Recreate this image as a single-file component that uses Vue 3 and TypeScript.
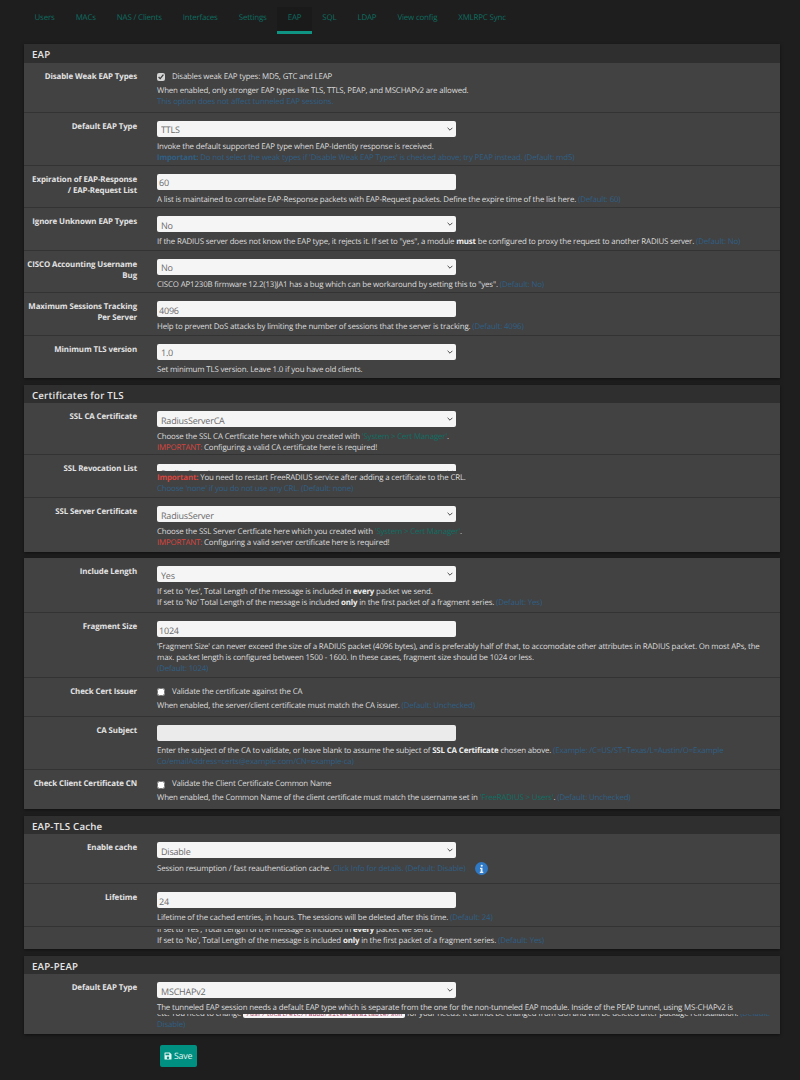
<script setup lang="ts">
const tabs = ["Users", "MACs", "NAS / Clients", "Interfaces", "Settings", "EAP", "SQL", "LDAP", "View config", "XMLRPC Sync"];
const activeTab = "EAP";
</script>

<template>
  <div class="page">
    <nav class="tabs">
      <a v-for="tab in tabs" :key="tab" class="tab" :class="{ active: tab === activeTab }">{{ tab }}</a>
    </nav>

    <section class="panel">
      <h2 class="heading">EAP</h2>
      <div class="row check-row">
        <div class="lbl">Disable Weak EAP Types</div>
        <div class="fld">
          <label class="check"><input type="checkbox" checked /> Disables weak EAP types: MD5, GTC and LEAP</label>
          <p class="help">When enabled, only stronger EAP types like TLS, TTLS, PEAP, and MSCHAPv2 are allowed.<br /><span class="dim">This option does not affect tunneled EAP sessions.</span></p>
        </div>
      </div>
      <div class="row">
        <div class="lbl">Default EAP Type</div>
        <div class="fld">
          <div class="sel"><select><option>TTLS</option></select><svg viewBox="0 0 10 6"><path d="M1 1l4 4 4-4" /></svg></div>
          <p class="help">Invoke the default supported EAP type when EAP-Identity response is received.<br /><span class="dim"><b>Important:</b> Do not select the weak types if 'Disable Weak EAP Types' is checked above; try PEAP instead. (Default: md5)</span></p>
        </div>
      </div>
      <div class="row">
        <div class="lbl">Expiration of EAP-Response<br />/ EAP-Request List</div>
        <div class="fld">
          <input class="txt" value="60" readonly />
          <p class="help">A list is maintained to correlate EAP-Response packets with EAP-Request packets. Define the expire time of the list here. <span class="dim">(Default: 60)</span></p>
        </div>
      </div>
      <div class="row">
        <div class="lbl">Ignore Unknown EAP Types</div>
        <div class="fld">
          <div class="sel"><select><option>No</option></select><svg viewBox="0 0 10 6"><path d="M1 1l4 4 4-4" /></svg></div>
          <p class="help">If the RADIUS server does not know the EAP type, it rejects it. If set to "yes", a module <b>must</b> be configured to proxy the request to another RADIUS server. <span class="dim">(Default: No)</span></p>
        </div>
      </div>
      <div class="row">
        <div class="lbl">CISCO Accounting Username<br />Bug</div>
        <div class="fld">
          <div class="sel"><select><option>No</option></select><svg viewBox="0 0 10 6"><path d="M1 1l4 4 4-4" /></svg></div>
          <p class="help">CISCO AP1230B firmware 12.2(13)JA1 has a bug which can be workaround by setting this to "yes". <span class="dim">(Default: No)</span></p>
        </div>
      </div>
      <div class="row">
        <div class="lbl">Maximum Sessions Tracking<br />Per Server</div>
        <div class="fld">
          <input class="txt" value="4096" readonly />
          <p class="help">Help to prevent DoS attacks by limiting the number of sessions that the server is tracking. <span class="dim">(Default: 4096)</span></p>
        </div>
      </div>
      <div class="row">
        <div class="lbl">Minimum TLS version</div>
        <div class="fld">
          <div class="sel"><select><option>1.0</option></select><svg viewBox="0 0 10 6"><path d="M1 1l4 4 4-4" /></svg></div>
          <p class="help">Set minimum TLS version. Leave 1.0 if you have old clients.</p>
        </div>
      </div>
    </section>

    <section class="panel">
      <h2 class="heading">Certificates for TLS</h2>
      <div class="row tight">
        <div class="lbl">SSL CA Certificate</div>
        <div class="fld">
          <div class="sel"><select><option>RadiusServerCA</option></select><svg viewBox="0 0 10 6"><path d="M1 1l4 4 4-4" /></svg></div>
          <p class="help">Choose the SSL CA Certficate here which you created with <span class="lnk">'System &gt; Cert Manager'</span>.<br /><span class="red">IMPORTANT:</span> Configuring a valid CA certificate here is required!</p>
        </div>
      </div>
      <!-- the screenshot was stitched here: top of the row is cut off by its help text -->
      <div class="row rev-row">
        <div class="rev-top">
          <div class="lbl">SSL Revocation List</div>
          <div class="sel"><select><option>RadiusRevoke</option></select><svg viewBox="0 0 10 6"><path d="M1 1l4 4 4-4" /></svg></div>
        </div>
        <p class="help rev-help"><b class="red">Important:</b> You need to restart FreeRADIUS service after adding a certificate to the CRL.<br /><span class="dim">Choose 'none' if you do not use any CRL. (Default: none)</span></p>
      </div>
      <div class="row">
        <div class="lbl">SSL Server Certificate</div>
        <div class="fld">
          <div class="sel"><select><option>RadiusServer</option></select><svg viewBox="0 0 10 6"><path d="M1 1l4 4 4-4" /></svg></div>
          <p class="help">Choose the SSL Server Certficate here which you created with <span class="lnk">'System &gt; Cert Manager'</span>.<br /><span class="red">IMPORTANT:</span> Configuring a valid server certificate here is required!</p>
        </div>
      </div>
    </section>

    <section class="panel plain">
      <div class="row">
        <div class="lbl">Include Length</div>
        <div class="fld">
          <div class="sel"><select><option>Yes</option></select><svg viewBox="0 0 10 6"><path d="M1 1l4 4 4-4" /></svg></div>
          <p class="help">If set to 'Yes', Total Length of the message is included in <b>every</b> packet we send.<br />If set to 'No' Total Length of the message is included <b>only</b> in the first packet of a fragment series. <span class="dim">(Default: Yes)</span></p>
        </div>
      </div>
      <div class="row">
        <div class="lbl">Fragment Size</div>
        <div class="fld">
          <input class="txt" value="1024" readonly />
          <p class="help">'Fragment Size' can never exceed the size of a RADIUS packet (4096 bytes), and is preferably half of that, to accomodate other attributes in RADIUS packet. On most APs, the max. packet length is configured between 1500 - 1600. In these cases, fragment size should be 1024 or less.<br /><span class="dim">(Default: 1024)</span></p>
        </div>
      </div>
      <div class="row check-row">
        <div class="lbl">Check Cert Issuer</div>
        <div class="fld">
          <label class="check"><input type="checkbox" /> Validate the certificate against the CA</label>
          <p class="help">When enabled, the server/client certificate must match the CA issuer. <span class="dim">(Default: Unchecked)</span></p>
        </div>
      </div>
      <div class="row">
        <div class="lbl">CA Subject</div>
        <div class="fld">
          <input class="txt empty" readonly />
          <p class="help">Enter the subject of the CA to validate, or leave blank to assume the subject of <b>SSL CA Certificate</b> chosen above. <span class="dim">(Example: /C=US/ST=Texas/L=Austin/O=Example Co/emailAddress=certs@example.com/CN=example-ca)</span></p>
        </div>
      </div>
      <div class="row check-row">
        <div class="lbl">Check Client Certificate CN</div>
        <div class="fld">
          <label class="check"><input type="checkbox" /> Validate the Client Certificate Common Name</label>
          <p class="help">When enabled, the Common Name of the client certificate must match the username set in <span class="lnk">'FreeRADIUS &gt; Users'</span>. <span class="dim">(Default: Unchecked)</span></p>
        </div>
      </div>
    </section>

    <section class="panel">
      <h2 class="heading">EAP-TLS Cache</h2>
      <div class="row cache-row">
        <div class="lbl">Enable cache</div>
        <div class="fld">
          <div class="sel"><select><option>Disable</option></select><svg viewBox="0 0 10 6"><path d="M1 1l4 4 4-4" /></svg></div>
          <p class="help info-line">
            <span>Session resumption / fast reauthentication cache. <span class="dim">Click Info for details. (Default: Disable)</span></span>
            <svg class="info" viewBox="0 0 26 26">
              <circle cx="13" cy="13" r="13" />
              <circle class="glyph" cx="13.5" cy="7.5" r="2.2" />
              <path class="glyph" d="M10 11.5h5v8h1.6V22H9.6v-2.500h1.800v-5.500H10z" />
            </svg>
          </p>
        </div>
      </div>
      <div class="row">
        <div class="lbl">Lifetime</div>
        <div class="fld">
          <input class="txt" value="24" readonly />
          <p class="help">Lifetime of the cached entries, in hours. The sessions will be deleted after this time. <span class="dim">(Default: 24)</span></p>
        </div>
      </div>
      <div class="row stitched">
        <div class="fld stitched-fld">
          <div class="cut cut-7"><span>If set to 'Yes', Total Length of the message is included in <b>every</b> packet we send.</span></div>
          <p class="help">If set to 'No', Total Length of the message is included <b>only</b> in the first packet of a fragment series. <span class="dim">(Default: Yes)</span></p>
        </div>
      </div>
    </section>

    <section class="panel">
      <h2 class="heading">EAP-PEAP</h2>
      <div class="row">
        <div class="lbl">Default EAP Type</div>
        <div class="fld">
          <div class="sel"><select><option>MSCHAPv2</option></select><svg viewBox="0 0 10 6"><path d="M1 1l4 4 4-4" /></svg></div>
          <p class="help">The tunneled EAP session needs a default EAP type which is separate from the one for the non-tunneled EAP module. Inside of the PEAP tunnel, using MS-CHAPv2 is</p>
          <div class="cut cut-6"><span>etc. You need to change <code>/usr/local/etc/raddb/sites-available/soh</code> for your needs. It cannot be changed from GUI and will be deleted after package reinstallation. <span class="dim">(Default:</span></span></div>
          <p class="help tail"><span class="dim">Disable)</span></p>
        </div>
      </div>
    </section>

    <button class="save" type="button">
      <svg viewBox="0 0 16 16"><path d="M2 1h9.500L15 4.500V14a1 1 0 0 1-1 1H2a1 1 0 0 1-1-1V2a1 1 0 0 1 1-1zm1 2v3.500h7.500V3zm5 6a2.500 2.500 0 1 0 0 5 2.500 2.500 0 0 0 0-5z" fill-rule="evenodd" /></svg>
      Save
    </button>
  </div>
</template>

<style>
html,
body {
  background: #1e1e1e;
}
</style>

<style scoped>
.page {
  width: 800px;
  height: 1080px;
  overflow: hidden;
  box-sizing: border-box;
  padding: 7px 20px 0 24px;
  background: #1e1e1e;
  color: #dcdcdc;
  font-family: "Open Sans", Lato, sans-serif;
  font-size: 7.900px;
  line-height: 11px;
  letter-spacing: -0.16px;
  text-rendering: geometricPrecision;
}

.tabs {
  display: flex;
  height: 27px;
  margin-bottom: 10px;
}

.tab {
  padding: 6px 10.500px 0;
  height: 18px;
  color: #0d6d60;
}

.tab.active {
  background: #1a1a1a;
  border-bottom: 3px solid #0f9484;
}

.panel {
  background: #424242;
  margin-bottom: 6.600px;
  box-shadow: 0 1px 3px rgba(0, 0, 0, 0.5);
}

.panel.plain .row:first-child {
  padding-bottom: 2.900px;
}

.heading {
  margin: 0;
  height: 18.600px;
  padding: 4px 0 0 8px;
  box-sizing: border-box;
  background: #2f2f2f;
  color: #e6e6e6;
  font-size: 9.700px;
  line-height: 13px;
  font-weight: 600;
  letter-spacing: 0.2px;
}

.row {
  display: grid;
  grid-template-columns: 111px 1fr;
  column-gap: 20px;
  padding: 8px 8px 1.400px 2px;
  border-bottom: 1px solid #333;
  box-sizing: border-box;
}

.row:last-child {
  border-bottom-color: transparent;
}

.row.tight {
  padding-bottom: 0;
}

.check-row {
  padding-bottom: 4px;
}

.cache-row {
  padding-bottom: 8px;
}

.lbl {
  margin-top: 1px;
  text-align: right;
  font-weight: 700;
  color: #e2e2e2;
  letter-spacing: -0.1px;
  white-space: nowrap;
}

.fld {
  min-width: 0;
}

.sel {
  position: relative;
  width: 299px;
  height: 16px;
}

.sel select,
.txt {
  display: block;
  width: 299px;
  height: 16px;
  box-sizing: border-box;
  margin: 0;
  border: 0;
  border-radius: 2px;
  background: #f5f5f5;
  color: #6b6b6b;
  font-family: inherit;
  font-size: 9px;
  letter-spacing: -0.2px;
  text-rendering: geometricPrecision;
  outline: 0;
}

.sel select {
  appearance: none;
  padding: 2px 0 0 4px;
}

.txt {
  padding: 2px 0 0 2px;
}

.txt.empty {
  background: #ebebeb;
}

.sel svg {
  position: absolute;
  right: 3px;
  top: 6px;
  width: 6px;
  height: 4px;
  fill: none;
  stroke: #444;
  stroke-width: 1.600;
}

.help {
  margin: 5px 0 0;
}

.check {
  display: flex;
  align-items: center;
  height: 11px;
  margin-top: 1px;
  white-space: pre;
}

.check input {
  width: 8px;
  height: 8px;
  margin: 0 5px 0 0;
  accent-color: #d4d4d4;
}

.check + .help {
  margin-top: 3px;
}

b {
  font-weight: 700;
  color: #eee;
}

.dim {
  color: #2f5f85;
}

.dim b {
  color: #2f5f85;
}

.lnk {
  color: #0f6f62;
}

.red,
b.red {
  color: #d9453f;
}

.rev-row {
  display: block;
  padding: 0 8px 2.800px 2px;
}

.rev-top {
  display: grid;
  grid-template-columns: 111px 299px;
  column-gap: 20px;
  height: 16px;
  padding-top: 9px;
  box-sizing: border-box;
  overflow: hidden;
}

.rev-top .lbl {
  margin-top: 0;
}

.rev-help {
  margin: 1.500px 0 0 131px;
}

.info-line {
  display: flex;
  align-items: center;
  gap: 10px;
  margin-top: 6px;
  height: 11px;
}

.info {
  position: relative;
  top: -1.500px;
  flex: none;
  width: 13px;
  height: 13px;
  fill: #2f79c4;
}

.info .glyph {
  fill: #e8eef5;
}

.stitched {
  display: block;
  margin-top: 2px;
  padding-top: 0;
  padding-left: 133px;
}

.cut {
  display: flex;
  align-items: flex-end;
  overflow: hidden;
  white-space: nowrap;
}

.cut-7 {
  height: 7px;
}

.cut-6 {
  height: 5.500px;
}

.stitched-fld .help {
  margin-top: 0;
}

.help.tail {
  margin: 0 0 1px;
}

code {
  padding: 0 3px;
  border-radius: 2px;
  background: #f7f4f5;
  color: #a33a5a;
  font-family: "Liberation Mono", monospace;
  font-size: 6.500px;
  letter-spacing: 0;
}

.save {
  display: flex;
  align-items: center;
  gap: 2px;
  width: 36.500px;
  height: 22px;
  margin: 11px 0 0 136px;
  padding: 0 0 0 4px;
  border: 0;
  border-radius: 2px;
  background: #009081;
  color: #e8f5f3;
  font-family: inherit;
  font-size: 8.800px;
  letter-spacing: -0.2px;
  text-rendering: geometricPrecision;
}

.save svg {
  width: 8px;
  height: 8px;
  fill: #e8f5f3;
}
</style>
